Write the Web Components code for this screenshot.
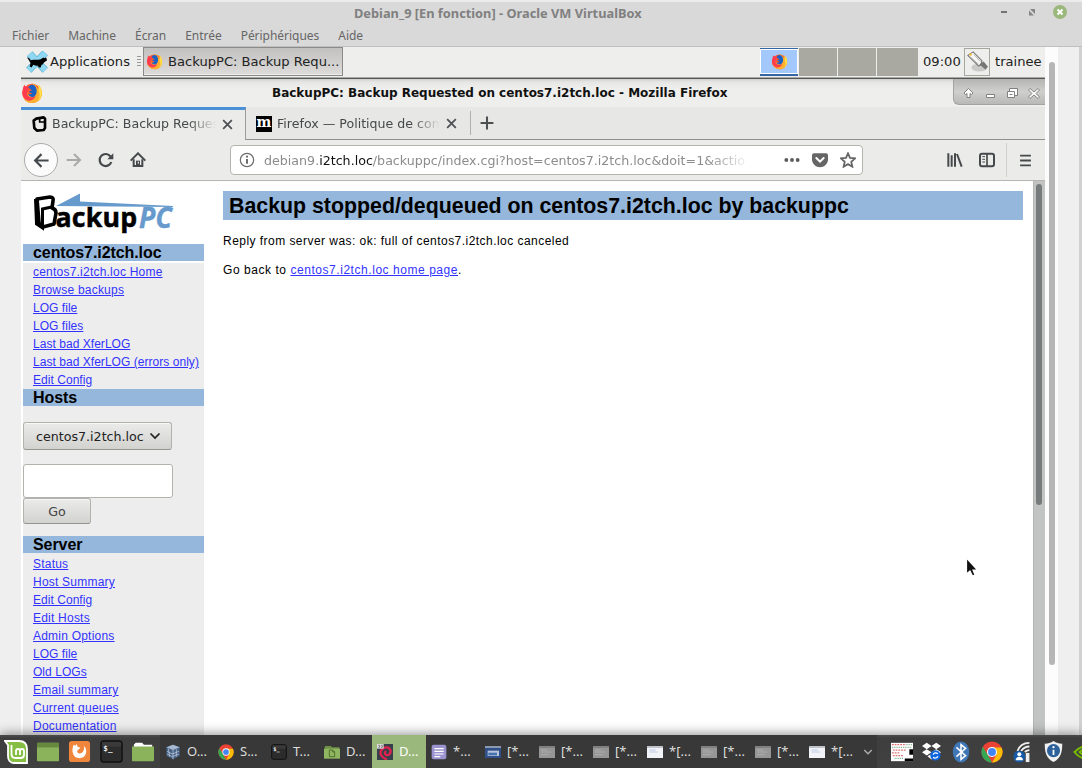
<!DOCTYPE html>
<html lang="fr">
<head>
<meta charset="utf-8">
<title>Debian_9 [En fonction] - Oracle VM VirtualBox</title>
<style>
  html, body {
    margin: 0;
    height: 100%;
    overflow: hidden;
    background: #efefef;
  }
</style>
</head>
<body>
<vm-desktop></vm-desktop>

<script>
const define = (name, html) => {
  customElements.define(name, class extends HTMLElement {
    constructor() {
      super();
      this.attachShadow({ mode: "open" });
      this.shadowRoot.innerHTML = html;
    }
  });
};

/* ---------- icons ---------- */

const icons = {
  firefox: `
    <circle cx="12" cy="12.5" r="10.5" fill="#ff5a2b"/>
    <path d="M2 10C1 17 5 23 12 23c7 0 11-5 11-11 0-4-2-7-4-9 1 3 1 5 0 6-1-4-4-7-7-8 1 3 5 5 4 10-1 5-8 5-9 1z" fill="#ffb02e"/>
    <path d="M19 3c5 5 5 14-1 18 3-4 3-8 1-12z" fill="#ffe14d"/>
    <path d="M2 8c0-2 1-4 2-5 0 1 1 2 2 2h3L8 9c-2 1-2 5 1 7 3 2 6 0 7-1-1 5-9 8-13 2-2-3-2-6-1-9z" fill="#ff3c4e"/>
    <path d="M8 6c1-3 5-4 7-2 3 3 3 10-1 12-3 1-6-1-6-3 2 1 4 0 4-1-2 0-3-1-3-2l3-1z" fill="#1c62c4"/>`,
  xfce: `
    <path d="M4 3l17 18M21 2L3 21" stroke="#5fb0d4" stroke-width="8"/>
    <path d="M4 3l17 18M21 2L3 21" stroke="#8fd8f2" stroke-width="6.500"/>
    <path d="M1 7c2 0 3 1 4 3 4-1 8 0 11-1l3-2 1 1 2-1 1 3-4 3c0 1-1 2-2 2l-1 3h-2l-1-2c-2 0-3 0-5-1l-2 3-2-1 1-4C4 12 3 9 1 7z" fill="#000"/>`,
  keyboard: `
    <ellipse cx="14" cy="19" rx="9" ry="4.500" fill="#bbb" opacity=".7"/>
    <path d="M1 5l6-4 10 10-1 5-3 1z" fill="#f6f6f4" stroke="#777" stroke-width="1.300"/>
    <path d="M14 15l5-3 5 6-3 3z" fill="#777"/>
    <path d="M4 7l9 8M8 4l7 8" stroke="#aaa"/>
    <circle cx="4" cy="4" r="1.500" fill="#f4ba3a"/>`,
  box: `
    <path d="M8 4l11-2 2 2v14l-2 3-10 1-4-4L4 7z" fill="none" stroke="#000" stroke-width="4" stroke-linejoin="round"/>
    <path d="M13 3v6h7" fill="none" stroke="#000" stroke-width="2.500"/>`,
  close: `<path d="M4 4l16 16M20 4L4 20" stroke="#4c5052" stroke-width="3.200" fill="none"/>`,
  plus: `<path d="M12 1v22M1 12h22" stroke="#4c5052" stroke-width="3.500"/>`,
  back: `<path d="M22 12H4M12 3l-9 9 9 9" fill="none" stroke="#46494b" stroke-width="3"/>`,
  forward: `<path d="M1 12h20M12 3l9 9-9 9" fill="none" stroke="#a8aaa9" stroke-width="3"/>`,
  reload: `<path d="M20 15a9 9 0 1 1-1-8" fill="none" stroke="#46494b" stroke-width="3.300"/><path d="M23 2v9h-9z" fill="#46494b"/>`,
  home: `
    <path d="M1 13L12 2l11 11" fill="none" stroke="#46494b" stroke-width="3"/>
    <path d="M5.500 11v10h13V11" fill="none" stroke="#46494b" stroke-width="3"/>
    <path d="M9 13h6v8H9z" fill="#46494b"/><path d="M12.500 14.500v3" stroke="#fff" stroke-width="1.500"/>`,
  info: `
    <circle cx="12" cy="12" r="10" fill="none" stroke="#6f6f6f" stroke-width="1.900"/>
    <path d="M12 10.500v7" stroke="#6f6f6f" stroke-width="3"/><circle cx="12" cy="7" r="1.700" fill="#6f6f6f"/>`,
  dots: `<circle cx="3.500" cy="12" r="2.900" fill="#5c5c5c"/><circle cx="12" cy="12" r="2.900" fill="#5c5c5c"/><circle cx="20.500" cy="12" r="2.900" fill="#5c5c5c"/>`,
  pocket: `
    <path d="M3 2h18q3 0 3 3v6c0 7-6 12-12 12S0 18 0 11V5q0-3 3-3z" fill="#666"/>
    <path d="M6.500 9l5.500 5.500L17.500 9" fill="none" stroke="#fff" stroke-width="3" stroke-linecap="round"/>`,
  star: `<path d="M12 2l3 6.800 7.500.8-5.600 5 1.600 7.400L12 18.200 5.500 22l1.600-7.400-5.600-5L9 8.800z" fill="none" stroke="#666" stroke-width="2.700"/>`,
  library: `<path d="M2 2v20M7 5v17M12 2v20" stroke="#46494b" stroke-width="3"/><path d="M15 3l7 19" stroke="#46494b" stroke-width="3"/>`,
  sidebar: `
    <rect x="1.500" y="2.500" width="21" height="19" rx="3" fill="none" stroke="#46494b" stroke-width="3"/>
    <path d="M12 3v18" stroke="#46494b" stroke-width="2.500"/><path d="M5 7h4M5 11h4M5 15h4" stroke="#46494b" stroke-width="1.500"/>`,
  menu: `<path d="M2 3h20M2 12h20M2 21h20" stroke="#46494b" stroke-width="3.500"/>`,
  chevron: `<path d="M3 7l9 9 9-9" fill="none" stroke="currentColor" stroke-width="3.500"/>`,
  mint: `
    <path d="M1 1h14c5 0 8 3 8 8v14H10c-4 0-6-3-6-7V5z" fill="#86be43" stroke="#fff" stroke-width="1.800"/>
    <path d="M7.500 5v9q0 4 4 4h5q3.500 0 3.500-3v-4q0-2-2-2t-2 2v4m0-4q0-2-2-2t-2 2v4" fill="none" stroke="#fff" stroke-width="1.800"/>`,
  desktop: `<rect x="0" y="2" width="24" height="20" rx="1" fill="#8ab35b"/><path d="M0 2h24v5H0z" fill="#67883f"/>`,
  ffOrange: `
    <rect x="1" y="1" width="22" height="22" rx="3" fill="#f0863c"/>
    <path d="M6 5c-3 6-1 14 6 14 7 0 9-8 5-13 0 4-1 8-5 8-3 0-3-3-1-4l2-2-3-1-1-3-1 2z" fill="#fff"/>`,
  terminal: `
    <rect x="1" y="1" width="22" height="22" rx="3" fill="#2c2c2c" stroke="#111" stroke-width="1.500"/>
    <path d="M2 2h20v5H2z" fill="#484848" opacity=".5"/>
    <text x="3.500" y="11" font-family="DejaVu Sans Mono" font-weight="bold" font-size="8" fill="#eee">$_</text>`,
  folder: `<path d="M2 4l2-2h7l2 2h9v4H2z" fill="#fff"/><path d="M0 6h24v15q0 1-1 1H1q-1 0-1-1z" fill="#8ab35b"/>`,
  files: `
    <path d="M1 4l1-1h8l2 2h11v6H1z" fill="#6f9047"/><path d="M0 7h24v15H0z" fill="#8fb660"/>
    <path d="M8 9h5l3 3v7H8zM13 9v3h3" fill="none" stroke="#53702f" stroke-width="1.500"/>`,
  vbox: `
    <path d="M12 1l10 4v13l-10 5-10-5V5z" fill="#456184"/><path d="M2 5l10 4 10-4-10-4z" fill="#a8b9cf"/>
    <path d="M12 9v14M5 7l2 12M17 8v11M3 11l8 4 10-4M3 15l8 4 10-4" stroke="#cbd5e4" fill="none"/>`,
  chrome: `
    <circle cx="12" cy="12" r="11.500" fill="#ea4335"/>
    <path d="M2 6.300l6 10 4 7.200A11.500 11.500 0 0 1 2 6.300z" fill="#34a853"/>
    <path d="M12 7h10.400A11.500 11.500 0 0 1 12 23.500L17 15z" fill="#fbbc05"/>
    <circle cx="12" cy="12" r="5.500" fill="#fff"/><circle cx="12" cy="12" r="4.300" fill="#4285f4"/>`,
  debian: `
    <rect width="24" height="24" fill="#37404a"/>
    <path d="M15 23C7 21 4 15 6 10c3-6 12-7 14-1 2 6-4 9-7 7-2-2-1-5 1-5" fill="none" stroke="#e1224e" stroke-width="3.500"/>
    <path d="M0 0h10v7H0z" fill="#ddd"/><path d="M2 2h2v3H2M6 2h2v3H6" stroke="#555" fill="none"/>`,
  note: `<rect x="1" y="1" width="22" height="22" rx="3" fill="#9b93cf"/><path d="M5 7h14M5 11h14M5 15h14M5 19h9" stroke="#fff" stroke-width="1.800"/>`,
  thumbBlue: `<path d="M0 3h24v18H0z" fill="#2f508a"/><path d="M0 3h24v3H0z" fill="#8b98ae"/><path d="M4 10h17v8H4z" fill="#b9c6da"/><path d="M5 13h13v4H5z" fill="#4772b0"/>`,
  thumbGray: `<path d="M0 3h24v18H0z" fill="#969696"/><path d="M0 3h24v3H0z" fill="#808080"/><path d="M3 9h9M3 12h15M3 16h12" stroke="#b5b9bd"/>`,
  thumbWhite: `<path d="M0 3h24v18H0z" fill="#f1f3f8"/><path d="M0 3h24v3H0z" fill="#bfc4cb"/><path d="M4 9h9M4 12h12" stroke="#a6b7dd"/>`,
  sheet: `
    <path d="M0 2h26v20H0z" fill="#fff"/>
    <path d="M1 4h15M2 10h15M1 13h9M2 16h12" stroke="#df7373" stroke-width="1.500" stroke-dasharray="2 1"/>
    <path d="M1 7h22M16 4h7M4 19h10" stroke="#7aa987" stroke-width="1.500" stroke-dasharray="1 1"/>
    <path d="M20 9h4v6h-4zM15 19h9v3h-9z" fill="#000"/>`,
  dropbox: `
    <path d="M6 1l6 4-6 4-6-4zM18 1l6 4-6 4-6-4zM6 9l6 4-6 4-6-4zM18 9l6 4-6 4-6-4zM12 15l5 3-5 4-5-4z" fill="#fff"/>
    <circle cx="17" cy="17" r="6.500" fill="#0d66df"/>
    <path d="M14 16a3.500 3.500 0 0 1 6-1M20 18a3.500 3.500 0 0 1-6 1" fill="none" stroke="#fff" stroke-width="1.500"/>`,
  bluetooth: `<ellipse cx="12" cy="12" rx="9" ry="11.500" fill="#3f76b5"/><path d="M7 7l10 9-5 4V4l5 4-10 9" fill="none" stroke="#fff" stroke-width="1.700"/>`,
  wifi: `
    <path d="M6 11c2-6 6-9 13-9M10 11c2-3 5-5 9-5M14 12c1-1 3-2 5-2" fill="none" stroke="#eee" stroke-width="2"/>
    <path d="M15 13h4v10h-4z" fill="#eee"/>
    <circle cx="8" cy="17" r="6.500" fill="#155aa7"/><circle cx="8" cy="14.500" r="2.200" fill="#fff"/><path d="M4 21c0-5 8-5 8 0z" fill="#fff"/>`,
  shield: `
    <path d="M12 0c3 2 6 3 10 3 0 9-1 16-10 21C3 19 2 12 2 3c4 0 7-1 10-3z" fill="#f0f0f0"/>
    <circle cx="12" cy="11" r="7.500" fill="#2d619c"/><path d="M12 10v6" stroke="#fff" stroke-width="2"/><circle cx="12" cy="7" r="1.300" fill="#fff"/>`,
  nvidia: `<path d="M24 2C13 3 7 7 2 12c5 7 12 10 22 10M24 7c-7 0-12 2-15 5 4 5 9 6 15 6" fill="none" stroke="#76b900" stroke-width="2.800"/>`,
};

class UiIcon extends HTMLElement {
  constructor() {
    super();
    this.attachShadow({ mode: "open" });
  }

  connectedCallback() {
    const size = this.getAttribute("size") || 16;
    this.shadowRoot.innerHTML = `
      <style>
        :host { display: inline-block; flex: none; width: ${size}px; height: ${size}px; }
        svg { display: block; width: 100%; height: 100%; }
      </style>
      <svg viewBox="0 0 24 24">${icons[this.getAttribute("name")]}</svg>
    `;
  }
}
customElements.define("ui-icon", UiIcon);

/* ---------- host window ---------- */

define("host-titlebar", `
  <style>
    :host {
      display: grid;
      grid-template-columns: 1fr auto;
      height: 25px;
      border-top: 2px solid #ececec;
      box-sizing: border-box;
      background: #d9d9d9;
      font: bold 12.8px/23px "Noto Sans", sans-serif;
      color: #808080;
    }
    .title { padding-left: 354px; white-space: nowrap; }
    .buttons { display: flex; align-items: center; padding-right: 14px; height: 20px; }
    svg { display: block; }
  </style>
  <div class="title"><slot></slot></div>
  <div class="buttons">
    <svg width="68" height="20" viewBox="0 0 68 20">
      <path d="M1 10h6" stroke="#747474" stroke-width="2"/>
      <path d="M30 7h5v5zM29 8.500v5h5z" fill="#868686"/>
      <circle cx="60" cy="10" r="7" fill="#9ab87c"/>
      <path d="M57.500 7.500l5 5M62.500 7.500l-5 5" stroke="#fff" stroke-width="2"/>
    </svg>
  </div>
`);

define("host-menubar", `
  <style>
    :host {
      display: flex;
      gap: 19px;
      height: 21px;
      padding-left: 12px;
      border-bottom: 1px solid #bfbfbf;
      background: #d9d9d9;
      font: 12px/21px "Noto Sans", sans-serif;
      letter-spacing: -.03px;
      color: #666;
    }
  </style>
  <slot></slot>
`);

/* ---------- guest panel ---------- */

define("xfce-panel", `
  <style>
    :host {
      display: flex;
      align-items: center;
      box-sizing: border-box;
      height: 32px;
      padding: 0 3px 2px 5px;
      border-bottom: 1px solid #555753;
      box-shadow: inset 0 -1px #a9aaa8;
      background: #eeeeec;
      font: 13.1px/18px "DejaVu Sans", sans-serif;
      color: #222;
      white-space: nowrap;
    }
    .apps { margin-left: 2px; width: 80px; }
    .grip {
      width: 4px; height: 11px; margin: 0 2px 0 7px;
      background: repeating-linear-gradient(#999 0 1px, transparent 1px 3px);
    }
    .window {
      display: flex; align-items: center; gap: 5px;
      box-sizing: border-box; width: 200px; height: 29px; padding-left: 2px;
      border: 1px solid #8a8b88;
      background: linear-gradient(#c2c1c0, #dddcdb);
      box-shadow: inset 0 -1px #eee;
    }
    .pager { display: flex; gap: 1px; margin-left: auto; }
    .pager div { width: 38px; height: 28px; background: #a9a9a1; }
    .pager div:last-child { width: 41px; }
    .pager .current {
      display: flex; align-items: center; justify-content: center;
      box-sizing: border-box;
      border-top: 1px solid #3465a4; border-bottom: 2px solid #3465a4;
      background: #a3c8fb; box-shadow: inset 0 0 0 1px #fff;
    }
    .clock { margin: 0 5px 0 5px; width: 36px; }
    .tray {
      display: flex; align-items: center; justify-content: center;
      box-sizing: border-box; width: 26px; height: 28px; margin-right: 5px;
      border: 1px solid #a6a79d;
    }
    .user { width: 47px; }
  </style>
  <ui-icon name="xfce" size="22"></ui-icon>
  <span class="apps">Applications</span>
  <span class="grip"></span>
  <div class="window"><ui-icon name="firefox" size="17"></ui-icon><span>BackupPC: Backup Requ...</span></div>
  <div class="pager">
    <div class="current"><ui-icon name="firefox" size="17"></ui-icon></div>
    <div></div><div></div><div></div>
  </div>
  <span class="clock">09:00</span>
  <span class="tray"><ui-icon name="keyboard" size="21"></ui-icon></span>
  <span class="user">trainee</span>
`);

/* ---------- browser ---------- */

define("ff-titlebar", `
  <style>
    :host {
      display: grid;
      grid-template-columns: 22px 1fr 92px;
      height: 28px;
      background: linear-gradient(#cfcfcd, #e6e6e4 3px, #eeeeec 9px);
      font: bold 12px/28px "DejaVu Sans", sans-serif;
      color: #111;
    }
    ui-icon { align-self: center; }
    .title { padding-left: 229px; white-space: nowrap; }
    .buttons {
      height: 25px;
      border: solid #a3a3a2;
      border-width: 0 0 1px 1px;
      border-radius: 0 0 0 6px;
      background: linear-gradient(#b4b4b3, #cfcfce 50%, #b9b9b8);
    }
  </style>
  <ui-icon name="firefox" size="22"></ui-icon>
  <div class="title"><slot></slot></div>
  <div class="buttons">
    <svg width="91" height="25" viewBox="0 0 91 25" fill="#fff" stroke="#808080">
      <path d="M14.500 9.500l4.500 4.500-1.500 1.500-1.500-1v4h-3v-4l-1.500 1L10 14z"/>
      <path d="M32.500 15.500h8v3h-8z"/>
      <path d="M55.500 9.500h8v7h-8z"/><path d="M53.500 12.500h7v6h-7z"/><path d="M55.500 15.500h3"/>
      <path d="M76 9.500l4 3.500 4-3.500 1.500 1.500-3.500 3.500 3.500 3.500-1.500 1.500-4-3.500-4 3.500-1.500-1.500 3.500-3.500-3.500-3.500z"/>
    </svg>
  </div>
`);

define("ff-tab", `
  <style>
    :host {
      display: grid;
      grid-template-columns: 16px 1fr 13px;
      align-items: center;
      column-gap: 5px;
      box-sizing: border-box;
      width: 224px;
      height: 33px;
      padding: 1px 12px 0 10px;
      border-bottom: 1px solid #8f918c;
    }
    :host([selected]) {
      width: 225px;
      border-top: 3px solid #4a90d9;
      border-right: 1px solid #9b9c98;
      border-bottom: 0;
      background: #ebebe9;
      padding: 0 11px 2px 10px;
    }
    .label {
      min-width: 0;
      white-space: nowrap;
      -webkit-mask-image: linear-gradient(90deg, #000 calc(100% - 28px), transparent);
      mask-image: linear-gradient(90deg, #000 calc(100% - 28px), transparent);
    }
  </style>
  <slot name="icon"></slot>
  <span class="label"><slot></slot></span>
  <ui-icon name="close" size="13"></ui-icon>
`);

define("ff-tabs", `
  <style>
    :host {
      display: flex;
      height: 33px;
      background: #e7e7e5;
      font: 12.6px/20px "DejaVu Sans", sans-serif;
      color: #46494b;
    }
    .m {
      width: 16px; height: 16px;
      background: #000; color: #fff;
      font: bold 14px/12px "DejaVu Serif", serif;
      text-align: center;
    }
    .rest {
      flex: 1; display: flex; align-items: center;
      border-bottom: 1px solid #8f918c;
    }
    .rest::before { content: ""; width: 1px; height: 24px; margin-right: 9px; background: #b0b1ae; }
  </style>
  <ff-tab selected><ui-icon slot="icon" name="box" size="16"></ui-icon>BackupPC: Backup Reques</ff-tab>
  <ff-tab><div slot="icon" class="m">m</div>Firefox — Politique de conf</ff-tab>
  <div class="rest"><ui-icon name="plus" size="14"></ui-icon></div>
`);

define("ff-toolbar", `
  <style>
    :host {
      display: flex;
      align-items: center;
      box-sizing: border-box;
      height: 41px;
      padding-left: 3px;
      border-bottom: 1px solid #b6b6b1;
      background: #ebebe9;
      font: 12.65px/20px "DejaVu Sans", sans-serif;
    }
    .back {
      display: flex; align-items: center; justify-content: center;
      box-sizing: border-box; width: 34px; height: 34px;
      border: 1px solid #aaa; border-radius: 50%; background: #fbfbfb;
    }
    .nav { display: flex; gap: 16px; margin-left: 8px; }
    .url {
      display: flex; align-items: center;
      box-sizing: border-box; width: 633px; height: 30px;
      margin-left: 84px; padding: 0 6px 0 8px;
      border: 1px solid #b4b4ae; border-radius: 4px; background: #fff;
    }
    .address {
      width: 488px; margin-left: 9px; padding-top: 1px;
      white-space: nowrap; color: #8c8c8c;
      -webkit-mask-image: linear-gradient(90deg, #000 calc(100% - 45px), transparent);
      mask-image: linear-gradient(90deg, #000 calc(100% - 45px), transparent);
    }
    .address b { font-weight: normal; color: #111; }
    .actions { display: flex; gap: 12px; margin-left: auto; }
    .tools { display: flex; align-items: center; gap: 16px; margin-left: auto; }
    .sep { width: 1px; height: 34px; margin: 0 12px 0 11px; background: #cfcfcc; }
    .last { margin-right: 13px; }
  </style>
  <div class="back"><ui-icon name="back" size="17"></ui-icon></div>
  <div class="nav">
    <ui-icon name="forward"></ui-icon>
    <ui-icon name="reload"></ui-icon>
    <ui-icon name="home"></ui-icon>
  </div>
  <div class="url">
    <ui-icon name="info" size="16"></ui-icon>
    <div class="address">debian9.<b>i2tch.loc</b>/backuppc/index.cgi?host=centos7.i2tch.loc&amp;doit=1&amp;actio</div>
    <div class="actions">
      <ui-icon name="dots"></ui-icon>
      <ui-icon name="pocket"></ui-icon>
      <ui-icon name="star"></ui-icon>
    </div>
  </div>
  <div class="tools">
    <ui-icon name="library"></ui-icon>
    <ui-icon name="sidebar"></ui-icon>
  </div>
  <span class="sep"></span>
  <ui-icon class="last" name="menu" size="13"></ui-icon>
`);

/* ---------- BackupPC page ---------- */

define("backuppc-logo", `
  <style>
    :host { display: block; height: 63px; }
    svg { display: block; }
  </style>
  <svg width="181" height="63" viewBox="0 0 181 63">
    <path d="M33 25L57 12.500v8L150 25v1z" fill="#6699cc"/>
    <path d="M14 18l13-2q4 0 3 4l-1 7q4 1 4 5l-2 11-11 3-4-4z" fill="#fff" stroke="#000" stroke-width="3.600" stroke-linejoin="round"/>
    <path d="M12.500 18l1 25 6 4V28l9-2" fill="none" stroke="#000" stroke-width="3"/>
    <text x="32.500" y="46" textLength="82" lengthAdjust="spacingAndGlyphs" font-family="Open Sans" font-weight="bold" font-size="27" fill="#000" stroke="#000" stroke-width=".5">ackup</text>
    <text x="116" y="46.500" textLength="33" lengthAdjust="spacingAndGlyphs" font-family="Open Sans" font-weight="bold" font-style="italic" font-size="29" fill="#6699cc" stroke="#6699cc" stroke-width=".5">PC</text>
  </svg>
`);

define("side-heading", `
  <style>
    :host {
      display: block;
      height: 17px;
      padding-left: 10px;
      background: #95b7db;
      font: bold 16px/17px "Liberation Sans", Arial, sans-serif;
      color: #000;
    }
  </style>
  <slot></slot>
`);

define("side-link", `
  <style>
    :host { display: block; height: 18px; padding-left: 10px; line-height: 18px; white-space: nowrap; }
    :host([tight]) { letter-spacing: .04px; }
    a { color: #3333ff; text-decoration: underline; }
  </style>
  <a><slot></slot></a>
`);

define("backuppc-sidebar", `
  <style>
    :host {
      display: block;
      width: 181px;
      height: 100%;
      margin-left: 2px;
      font: 12px "Liberation Sans", Arial, sans-serif;
      letter-spacing: .22px;
    }
    side-heading { letter-spacing: -.08px; }
    .body { margin-top: 2px; height: 500px; background: #ededed; }
    .select, .go {
      display: flex; align-items: center; box-sizing: border-box;
      border: 1px solid #b3b3ad; border-bottom-color: #94958f; border-radius: 3px;
      background: linear-gradient(#ebebea, #d2d2cf);
      box-shadow: inset 0 1px #f7f7f6;
      font: 12.65px "DejaVu Sans", sans-serif;
      letter-spacing: 0;
      color: #222;
    }
    .select {
      justify-content: space-between;
      width: 149px; height: 28px; margin: 16px 0 14px; padding: 0 10px 0 12px;
    }
    .input {
      box-sizing: border-box; width: 150px; height: 34px;
      border: 1px solid #b3b3ad; border-radius: 3px; background: #fff;
    }
    .go {
      justify-content: center; width: 68px; height: 26px;
      margin-bottom: 12px; padding-top: 1px; color: #444;
    }
    .server { padding-top: 2px; }
  </style>
  <backuppc-logo></backuppc-logo>
  <side-heading>centos7.i2tch.loc</side-heading>
  <div class="body">
    <side-link>centos7.i2tch.loc Home</side-link>
    <side-link>Browse backups</side-link>
    <side-link tight>LOG file</side-link>
    <side-link tight>LOG files</side-link>
    <side-link tight>Last bad XferLOG</side-link>
    <side-link tight>Last bad XferLOG (errors only)</side-link>
    <side-link tight>Edit Config</side-link>
    <side-heading>Hosts</side-heading>
    <div class="select"><span>centos7.i2tch.loc</span><ui-icon name="chevron" size="12"></ui-icon></div>
    <div class="input"></div>
    <div class="go">Go</div>
    <side-heading>Server</side-heading>
    <div class="server">
      <side-link>Status</side-link>
      <side-link>Host Summary</side-link>
      <side-link tight>Edit Config</side-link>
      <side-link>Edit Hosts</side-link>
      <side-link>Admin Options</side-link>
      <side-link tight>LOG file</side-link>
      <side-link tight>Old LOGs</side-link>
      <side-link>Email summary</side-link>
      <side-link>Current queues</side-link>
      <side-link>Documentation</side-link>
    </div>
  </div>
`);

define("backuppc-page", `
  <style>
    :host {
      display: grid;
      grid-template-columns: 183px 1fr 12px;
      height: 554px;
      overflow: hidden;
      background: #fff;
    }
    main {
      padding: 10px 10px 0 19px;
      font: 12px/17px "Liberation Sans", Arial, sans-serif;
      letter-spacing: .46px;
      color: #000;
    }
    h1 {
      margin: 0 0 13px;
      padding-left: 6px;
      height: 29px;
      background: #95b7db;
      font: bold 21.33px/30px "Liberation Sans", Arial, sans-serif;
      letter-spacing: 0;
      white-space: nowrap;
    }
    p { margin: 0 0 12px; }
    p + p { letter-spacing: .55px; }
    a { color: #3333ff; text-decoration: underline; }
    .scroll { padding: 3px 3px 0 2px; border-left: 1px solid #b3b5b3; background: #c2c4c3; }
    .scroll div { height: 321px; border-radius: 3px; background: #777b7b; }
  </style>
  <backuppc-sidebar></backuppc-sidebar>
  <main>
    <h1>Backup stopped/dequeued on centos7.i2tch.loc by backuppc</h1>
    <p>Reply from server was: ok: full of centos7.i2tch.loc canceled</p>
    <p>Go back to <a>centos7.i2tch.loc home page</a>.</p>
  </main>
  <div class="scroll"><div></div></div>
`);

/* ---------- host taskbar ---------- */

define("task-item", `
  <style>
    :host {
      display: flex;
      align-items: center;
      gap: 6px;
      box-sizing: border-box;
      width: 54px;
      height: 33px;
      padding-left: 5px;
      background: #383838;
    }
    :host([narrow]) { width: 53px; }
    :host([active]) { background: #9ab87c; color: #fff; }
  </style>
  <slot name="icon"></slot><slot></slot>
`);

class TaskBar extends HTMLElement {
  constructor() {
    super();
    this.attachShadow({ mode: "open" });
    const tasks = [
      ["vbox", "O...", "narrow"],
      ["chrome", "S...", "narrow"],
      ["terminal", "T...", "narrow"],
      ["files", "D...", "narrow"],
      ["debian", "D...", "active"],
      ["note", "*..."],
      ["thumbBlue", "[*..."],
      ["thumbGray", "[*..."],
      ["thumbGray", "[*..."],
      ["thumbWhite", "*[..."],
      ["thumbGray", "[*..."],
      ["thumbGray", "[*..."],
      ["thumbWhite", "*[..."],
    ];
    this.shadowRoot.innerHTML = `
      <style>
        :host {
          position: relative;
          display: flex;
          height: 33px;
          background: linear-gradient(#4b4b4b, #3e3e3e 3px, #404040);
          box-shadow: 0 -1px 12px rgba(0, 0, 0, .45);
          font: 13px/35px "Noto Sans", sans-serif;
          color: #ddd;
          white-space: nowrap;
        }
        .launchers { display: flex; align-items: center; gap: 9px; width: 156px; padding-left: 4px; }
        .more { display: flex; align-items: center; justify-content: center; width: 19px; background: #383838; color: #aaa; }
        .tray { display: flex; flex: 1; align-items: center; gap: 9px; padding-left: 14px; overflow: hidden; }
      </style>
      <div class="launchers">
        <ui-icon name="mint" size="24"></ui-icon>
        <ui-icon name="desktop" size="22"></ui-icon>
        <ui-icon name="ffOrange" size="23"></ui-icon>
        <ui-icon name="terminal" size="23"></ui-icon>
        <ui-icon name="folder" size="22"></ui-icon>
      </div>
      ${tasks.map(([icon, label, state = ""]) => `
        <task-item ${state}><ui-icon slot="icon" name="${icon}"></ui-icon>${label}</task-item>`).join("")}
      <div class="more"><ui-icon name="chevron" size="10"></ui-icon></div>
      <div class="tray">
        <ui-icon name="sheet" size="22"></ui-icon>
        <ui-icon name="dropbox" size="19"></ui-icon>
        <ui-icon name="bluetooth" size="22"></ui-icon>
        <ui-icon name="chrome" size="22"></ui-icon>
        <ui-icon name="wifi" size="22"></ui-icon>
        <ui-icon name="shield" size="21"></ui-icon>
        <ui-icon name="nvidia" size="18"></ui-icon>
      </div>
    `;
  }
}
customElements.define("task-bar", TaskBar);

/* ---------- whole screen ---------- */

define("vm-desktop", `
  <style>
    :host {
      position: relative;
      display: flex;
      flex-direction: column;
      width: 1082px;
      height: 768px;
      overflow: hidden;
    }
    .view {
      display: grid;
      grid-template-columns: 21px 1024px 13px 1fr 3px;
      height: 688px;
      background: #efefef;
    }
    .guest { overflow: hidden; }
    .scroll { padding: 15px 3px 0 4px; background: #fcfcfc; }
    .scroll div { height: 603px; border-radius: 3px; background: #b6b6b6; }
    .edge { background: #d2d2d2; }
    .pointer { position: absolute; left: 965px; top: 556px; }
  </style>
  <host-titlebar>Debian_9 [En fonction] - Oracle VM VirtualBox</host-titlebar>
  <host-menubar>
    <span>Fichier</span><span>Machine</span><span>Écran</span><span>Entrée</span><span>Périphériques</span><span>Aide</span>
  </host-menubar>
  <div class="view">
    <div></div>
    <div class="guest">
      <xfce-panel></xfce-panel>
      <ff-titlebar>BackupPC: Backup Requested on centos7.i2tch.loc - Mozilla Firefox</ff-titlebar>
      <ff-tabs></ff-tabs>
      <ff-toolbar></ff-toolbar>
      <backuppc-page></backuppc-page>
    </div>
    <div class="scroll"><div></div></div>
    <div></div>
    <div class="edge"></div>
  </div>
  <task-bar></task-bar>
  <svg class="pointer" width="16" height="22" viewBox="0 0 16 22">
    <path d="M1.500 2v16l3.500-3 2.500 5 2.500-1-2-5h4.500z" fill="#111" stroke="#fff" stroke-width="1.200"/>
  </svg>
`);
</script>
</body>
</html>
